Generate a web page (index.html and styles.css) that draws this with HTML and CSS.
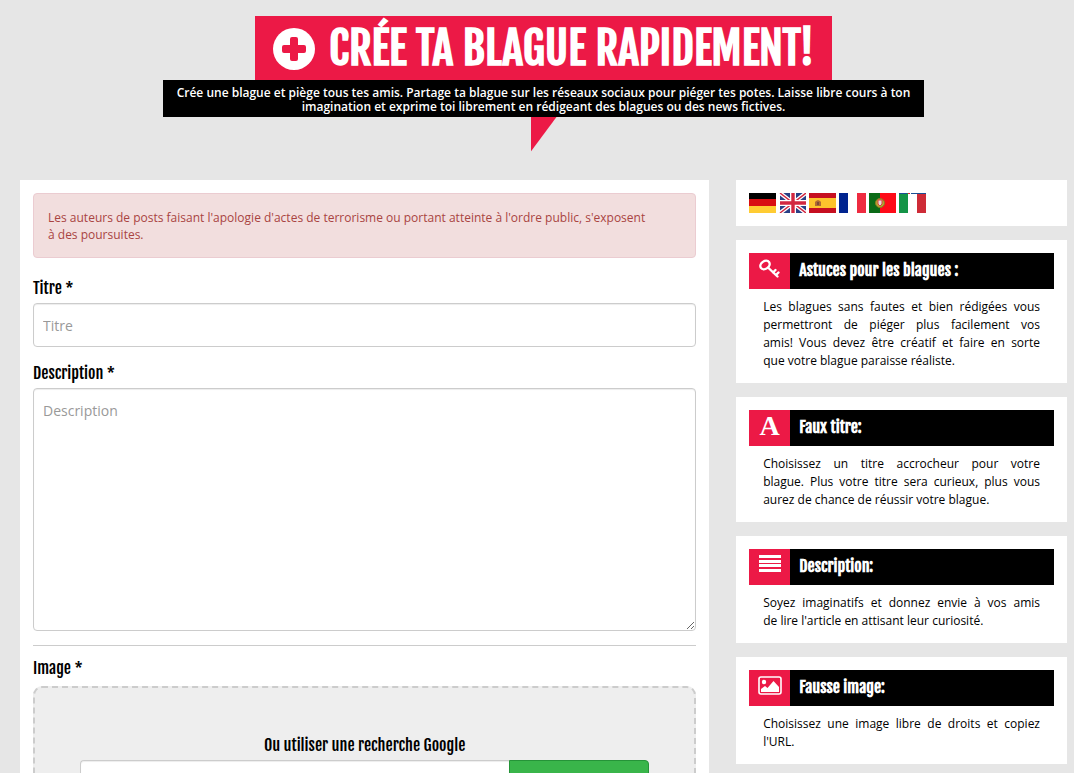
FILE: index.html
```html
<!DOCTYPE html>
<html lang="fr">
<head>
    <meta charset="UTF-8">
    <meta name="viewport" content="width=device-width, initial-scale=1.0">
    <title>Crée ta blague</title>
    <link rel="stylesheet" href="styles.css">
</head>
<body>
    <header class="banner">
        <h1 class="banner-title">
            <svg class="banner-icon" viewBox="0 0 42 42" aria-hidden="true">
                <circle cx="21" cy="21" r="21" fill="#fff"/>
                <path d="M19 9h4a2 2 0 0 1 2 2v6h6a2 2 0 0 1 2 2v4a2 2 0 0 1-2 2h-6v6a2 2 0 0 1-2 2h-4a2 2 0 0 1-2-2v-6h-6a2 2 0 0 1-2-2v-4a2 2 0 0 1 2-2h6v-6a2 2 0 0 1 2-2z" fill="#ec1946"/>
            </svg>
            <span>CRÉE TA BLAGUE RAPIDEMENT!</span>
        </h1>
        <p class="banner-text">Crée une blague et piège tous tes amis. Partage ta blague sur les réseaux sociaux pour piéger tes potes. Laisse libre cours à ton imagination et exprime toi librement en rédigeant des blagues ou des news fictives.</p>
        <div class="banner-arrow"></div>
    </header>

    <div class="container">
        <main class="card">
            <form>
                <div class="alert">Les auteurs de posts faisant l'apologie d'actes de terrorisme ou portant atteinte à l'ordre public, s'exposent à&nbsp;des&nbsp;poursuites.</div>

                <label class="form-label" for="titre">Titre *</label>
                <input class="form-control" type="text" id="titre" placeholder="Titre">

                <label class="form-label" for="description">Description *</label>
                <textarea class="form-control form-textarea" id="description" placeholder="Description"></textarea>

                <hr>

                <label class="form-label" for="recherche">Image *</label>
                <div class="dropzone">
                    <label class="form-label" for="recherche">Ou utiliser une recherche Google</label>
                    <div class="search-group">
                        <input class="form-control search-input" type="text" id="recherche">
                        <button class="search-button" type="button" aria-label="Rechercher"></button>
                    </div>
                </div>
            </form>
        </main>

        <aside class="sidebar">
            <!-- Languages -->
            <nav class="card flags">
                <a href="#de" aria-label="Deutsch">
                    <svg viewBox="0 0 27 20"><path fill="#000" d="M0 0h27v6H0z"/><path fill="#d90d12" d="M0 6h27v7H0z"/><path fill="#fc3" d="M0 13h27v7H0z"/></svg>
                </a>
                <a href="#en" aria-label="English">
                    <svg viewBox="0 0 27 20">
                        <path fill="#293f85" d="M1 0h26v20H1z"/>
                        <path stroke="#fff" stroke-width="4" d="M1 0l26 20M27 0L1 20"/>
                        <path stroke="#d22740" stroke-width="1.4" d="M1 0l26 20M27 0L1 20"/>
                        <path stroke="#fff" stroke-width="6" d="M14 0v20M1 10h26"/>
                        <path stroke="#d22740" stroke-width="3.4" d="M14 0v20M1 10h26"/>
                    </svg>
                </a>
                <a href="#es" aria-label="Español">
                    <svg viewBox="0 0 27 20">
                        <path fill="#c60f20" d="M0 0h27v20H0z"/><path fill="#fdc32d" d="M0 5h27v10H0z"/>
                        <path fill="#b06a34" d="M6 9l1-1 2-1 2 1 1 1v4H6z"/><path fill="#7d4a35" d="M8 9h2v3H8z"/>
                    </svg>
                </a>
                <a href="#fr" aria-label="Français">
                    <svg viewBox="0 0 27 20"><path fill="#00248f" d="M0 0h9v20H0z"/><path fill="#fff" d="M9 0h9v20H9z"/><path fill="#ee2b40" d="M18 0h9v20h-9z"/></svg>
                </a>
                <a href="#pt" aria-label="Português">
                    <svg viewBox="0 0 27 20">
                        <path fill="#0b6a17" d="M0 0h11v20H0z"/><path fill="#fe0b18" d="M11 0h16v20H11z"/>
                        <circle cx="11" cy="10" r="4.5" fill="#b5a832" stroke="#8b7a22"/>
                        <path fill="#e8dede" stroke="#d93b40" d="M9 7h4v4l-2 2-2-2z"/>
                    </svg>
                </a>
                <a href="#it" aria-label="Italiano">
                    <svg viewBox="0 0 27 20">
                        <path fill="#149447" d="M0 0h9v20H0z"/><path fill="#fff" d="M9 0h9v20H9z"/><path fill="#ce2b37" d="M18 0h9v20h-9z"/>
                        <path fill="#1b4f94" d="M0 0h8v1H0zM12 0h15v1H12z"/><path fill="#d23" d="M9 0h2v1H9z"/>
                    </svg>
                </a>
            </nav>

            <section class="card">
                <h2 class="tip-title">
                    <span class="tip-icon">
                        <svg viewBox="0 0 24 24" fill="none" stroke="#fff">
                            <ellipse cx="7" cy="8" rx="5" ry="3.800" stroke-width="2.4" transform="rotate(-35 7 8)"/>
                            <path stroke-width="2.4" stroke-linecap="round" d="M10.500 11l9 8.500M15 15.500l2.500-2.500M18 18l2.500-2.500"/>
                        </svg>
                    </span>
                    <span>Astuces pour les blagues :</span>
                </h2>
                <p class="tip-text">Les blagues sans fautes et bien rédigées vous permettront de piéger plus facilement vos amis!&nbsp;Vous devez être créatif et faire en sorte que&nbsp;votre blague paraisse réaliste.</p>
            </section>

            <section class="card">
                <h2 class="tip-title">
                    <span class="tip-icon tip-letter" aria-hidden="true">A</span>
                    <span>Faux titre:</span>
                </h2>
                <p class="tip-text">Choisissez un titre accrocheur pour votre blague.&nbsp;Plus votre titre sera curieux, plus vous aurez&nbsp;de&nbsp;chance de réussir votre blague.</p>
            </section>

            <section class="card">
                <h2 class="tip-title">
                    <span class="tip-icon">
                        <svg viewBox="0 0 24 24" fill="#fff"><path d="M1 2h22v3H1zM1 7h22v3H1zM1 11h22v3H1zM1 16h22v3H1z"/></svg>
                    </span>
                    <span>Description:</span>
                </h2>
                <p class="tip-text">Soyez imaginatifs et donnez envie à vos amis de&nbsp;lire l'article en attisant leur curiosité.</p>
            </section>

            <section class="card">
                <h2 class="tip-title">
                    <span class="tip-icon">
                        <svg viewBox="0 0 24 24">
                            <rect x="1" y="3" width="22" height="17" rx="2" fill="none" stroke="#fff" stroke-width="1.6"/>
                            <circle cx="6" cy="8" r="2.2" fill="#fff"/>
                            <path fill="#fff" d="M3 18v-3l4-3 2.500 2L15.500 7l5.500 6v5z"/>
                        </svg>
                    </span>
                    <span>Fausse image:</span>
                </h2>
                <p class="tip-text">Choisissez une image libre de droits et copiez l'URL.</p>
            </section>
        </aside>
    </div>
</body>
</html>
```

FILE: styles.css
```css
* {
    box-sizing: border-box;
}
body {
    margin: 0;
    padding: 16px 7px 0 20px;
    background-color: #e6e6e6;
    color: #000;
    font-family: "Open Sans", sans-serif;
    font-size: 12px;
    line-height: 18px;
}

/* Banner */
.banner {
    display: flex;
    flex-direction: column;
    align-items: center;
    margin-bottom: 28px;
}
.banner-title {
    display: flex;
    align-items: center;
    gap: 14px;
    margin: 0;
    padding: 2px 18px 0;
    background-color: #ec1946;
    color: #fff;
    font-family: "Fjalla One", "Liberation Sans Narrow", "Liberation Sans", sans-serif;
    font-size: 44px;
    font-weight: bold;
    line-height: 62px;
}
.banner-icon {
    width: 42px;
    height: 42px;
}
.banner-text {
    max-width: 761px;
    margin: 0;
    padding: 6px 9px 3px;
    background-color: #000;
    color: #fff;
    font-weight: 600;
    line-height: 14px;
    text-align: center;
}
.banner-arrow {
    width: 26px;
    height: 35px;
    background-color: #ec1946;
    clip-path: polygon(0 0, 100% 0, 0 100%);
}

/* Layout */
.container {
    display: grid;
    grid-template-columns: 25fr 12fr;
    gap: 27px;
    align-items: start;
}
.card {
    padding: 13px;
    background-color: #fff;
}
.sidebar {
    display: grid;
    gap: 14px;
}

/* Form */
.alert {
    margin-bottom: 17px;
    padding: 15px 14px 14px;
    border: 1px solid #ebccd1;
    border-radius: 4px;
    background-color: #f2dede;
    color: #a94442;
    line-height: 17px;
}
.form-label {
    display: block;
    margin-bottom: 2px;
    font-family: "Fjalla One", "Liberation Sans Narrow", "Liberation Sans", sans-serif;
    font-size: 16px;
    font-weight: normal;
    line-height: 26px;
}
.form-control {
    display: block;
    width: 100%;
    height: 44px;
    margin-bottom: 13px;
    padding: 9px;
    border: 1px solid #ccc;
    border-radius: 4px;
    background-color: #fff;
    box-shadow: inset 0 1px 1px rgba(0, 0, 0, 0.075);
    font-family: "Open Sans", sans-serif;
    font-size: 14px;
}
.form-control::placeholder {
    color: #999;
}
.form-textarea {
    height: 243px;
    padding-top: 12px;
    resize: both;
}
hr {
    margin: 14px 0 9px;
    border: none;
    border-top: 1px solid #ccc;
}
.dropzone {
    margin-top: 5px;
    padding: 44px 45px;
    border: 2px dashed #ccc;
    border-radius: 9px;
    background-color: #eee;
    text-align: center;
}
.search-group {
    display: flex;
}
.search-input {
    flex: 1;
    margin: 0;
    border-right: none;
    border-radius: 4px 0 0 4px;
}
.search-button {
    width: 140px;
    border: 1px solid #259438;
    border-radius: 0 4px 4px 0;
    background-color: #39b54a;
    cursor: pointer;
}

/* Sidebar */
.flags {
    display: flex;
    gap: 3px;
}
.flags svg {
    display: block;
    width: 27px;
    height: 20px;
}
.tip-title {
    display: flex;
    gap: 9px;
    margin: 0;
    background-color: #000;
    color: #fff;
    font-family: "Fjalla One", "Liberation Sans Narrow", "Liberation Sans", sans-serif;
    font-size: 16px;
    font-weight: bold;
    line-height: 34px;
}
.tip-icon {
    display: flex;
    justify-content: center;
    width: 41px;
    height: 36px;
    padding-top: 4px;
    background-color: #ec1946;
}
.tip-icon svg {
    width: 24px;
    height: 24px;
}
.tip-letter {
    font-family: "Liberation Serif", serif;
    font-size: 28px;
    line-height: 24px;
}
.tip-text {
    margin: 9px 0 0;
    padding: 0 14px;
    text-align: justify;
}
```
